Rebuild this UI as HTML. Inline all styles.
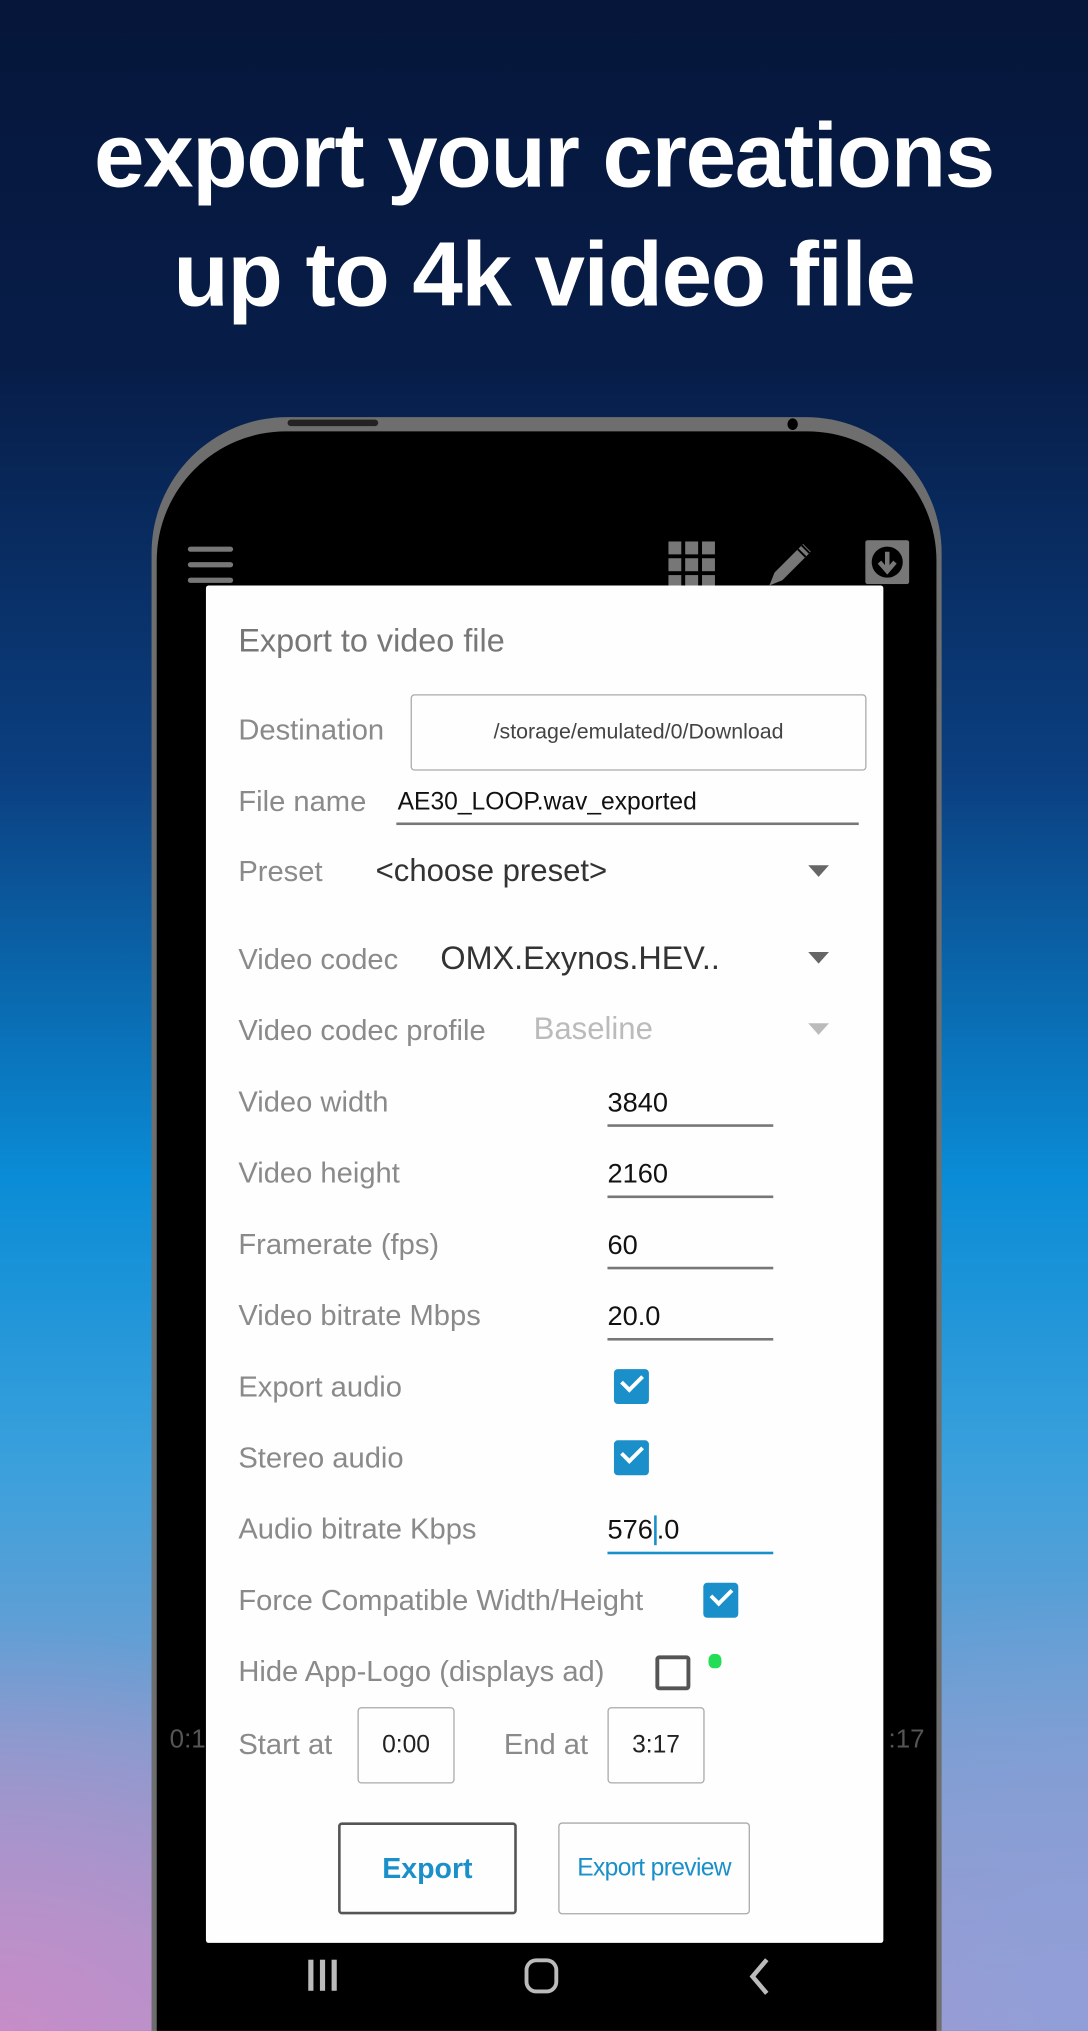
<!DOCTYPE html>
<html><head><meta charset="utf-8"><style>
*{margin:0;padding:0;box-sizing:border-box}
html,body{width:1088px;height:2031px;overflow:hidden}
body{background:#061638;position:relative}
#w{position:absolute;left:0;top:0;width:840px;height:1568px;transform:scale(1.295238);transform-origin:0 0;overflow:hidden;
background:
radial-gradient(ellipse 500px 500px at 840px 1568px,rgba(140,160,220,.8),rgba(140,160,220,0) 70%),
radial-gradient(ellipse 520px 420px at 0px 1568px,rgba(200,140,200,.95),rgba(200,140,200,0) 75%),
linear-gradient(180deg,#06163a 0%,#071d48 18%,#0b3f80 38%,#0a8cd6 58%,#3aa0dc 72%,#7a9ed0 86%,#a698cc 100%);
font-family:"Liberation Sans",sans-serif}
.h{position:absolute;left:0;width:840px;text-align:center;color:#fff;font-weight:bold;font-size:70px;letter-spacing:-1px;line-height:80px}
.bez{position:absolute;left:117px;top:322px;width:610px;height:1300px;background:#6e6e6e;border-radius:105px 105px 0 0}
.scr{position:absolute;left:121px;top:333px;width:602px;height:1300px;background:#000;border-radius:100px 100px 0 0}
.dlg{position:absolute;left:159px;top:452px;width:523px;height:1048px;background:#fefefe;border-radius:2px}
.l{position:absolute;left:184px;font-size:22.5px;color:#8a8a8a;line-height:30px;white-space:nowrap}
.v{position:absolute;font-size:21px;color:#111;line-height:30px;white-space:nowrap}
.u{position:absolute;height:2px;background:#777}
.cb{position:absolute;width:27px;height:27px;background:#1a8fc9;border-radius:3px}
.cb:after{content:"";position:absolute;left:6px;top:4px;width:13px;height:7px;border-left:3px solid #fff;border-bottom:3px solid #fff;transform:rotate(-45deg)}
.tri{position:absolute;width:0;height:0;border-left:8px solid transparent;border-right:8px solid transparent;border-top:9px solid #666}
.box{position:absolute;border:1.5px solid #aaa;border-radius:3px;text-align:center;color:#222}
</style></head><body><div id="w">
<div class="h" style="top:80px">export your creations</div>
<div class="h" style="top:172px">up to 4k video file</div>

<div class="bez"></div>
<div style="position:absolute;left:222px;top:324px;width:70px;height:5px;background:#222;border-radius:3px"></div>
<div style="position:absolute;left:608px;top:323px;width:8px;height:9px;background:#000;border-radius:50%"></div>
<div class="scr"></div>

<div style="position:absolute;left:145px;top:422px;width:35px;height:4px;background:#777;border-radius:2px;box-shadow:0 12px 0 #777,0 24px 0 #777"></div>
<svg style="position:absolute;left:516px;top:418px" width="36" height="36"><g fill="#777"><rect x="0" y="0" width="10" height="10"/><rect x="13" y="0" width="10" height="10"/><rect x="26" y="0" width="10" height="10"/><rect x="0" y="13" width="10" height="10"/><rect x="13" y="13" width="10" height="10"/><rect x="26" y="13" width="10" height="10"/><rect x="0" y="26" width="10" height="10"/><rect x="13" y="26" width="10" height="10"/><rect x="26" y="26" width="10" height="10"/></g></svg>
<svg style="position:absolute;left:590px;top:416px" width="40" height="38"><path d="M4 36 L8 26 L30 4 L36 10 L14 32 Z" fill="#777"/><path d="M26 8 L32 14 M29 5 L35 11" stroke="#000" stroke-width="1.5"/></svg>
<svg style="position:absolute;left:668px;top:417px" width="34" height="34"><rect width="34" height="34" rx="2" fill="#777"/><circle cx="17" cy="17" r="12" fill="#000"/><path d="M17 9 V23 M11 17 L17 24 L23 17" stroke="#777" stroke-width="3.5" fill="none"/></svg>

<div style="position:absolute;left:131px;top:1332px;font-size:20px;color:#555">0:1</div>
<div style="position:absolute;left:686px;top:1332px;font-size:20px;color:#555">:17</div>

<div class="dlg"></div>
<div class="l" style="top:480px;font-size:25px;color:#777">Export to video file</div>

<div class="l" style="top:549px">Destination</div>
<div class="box" style="left:317px;top:536px;width:352px;height:59px;line-height:56px;font-size:16.5px;color:#444">/storage/emulated/0/Download</div>

<div class="l" style="top:604px">File name</div>
<div class="v" style="left:307px;top:605px;font-size:19px">AE30_LOOP.wav_exported</div>
<div class="u" style="left:306px;top:635px;width:357px"></div>

<div class="l" style="top:658px">Preset</div>
<div class="v" style="left:290px;top:658px;font-size:24px;color:#333">&lt;choose preset&gt;</div>
<div class="tri" style="left:624px;top:668px"></div>

<div class="l" style="top:726px">Video codec</div>
<div class="v" style="left:340px;top:725px;font-size:25px;color:#333">OMX.Exynos.HEV..</div>
<div class="tri" style="left:624px;top:735px"></div>

<div class="l" style="top:781px">Video codec profile</div>
<div class="v" style="left:412px;top:780px;font-size:24px;color:#bbb">Baseline</div>
<div class="tri" style="left:624px;top:790px;border-top-color:#bbb"></div>

<div class="l" style="top:836px">Video width</div>
<div class="v" style="left:469px;top:837px">3840</div><div class="u" style="left:469px;top:868px;width:128px"></div>
<div class="l" style="top:891px">Video height</div>
<div class="v" style="left:469px;top:892px">2160</div><div class="u" style="left:469px;top:923px;width:128px"></div>
<div class="l" style="top:946px">Framerate (fps)</div>
<div class="v" style="left:469px;top:947px">60</div><div class="u" style="left:469px;top:978px;width:128px"></div>
<div class="l" style="top:1001px">Video bitrate Mbps</div>
<div class="v" style="left:469px;top:1002px">20.0</div><div class="u" style="left:469px;top:1033px;width:128px"></div>

<div class="l" style="top:1056px">Export audio</div><div class="cb" style="left:474px;top:1057px"></div>
<div class="l" style="top:1111px">Stereo audio</div><div class="cb" style="left:474px;top:1112px"></div>
<div class="l" style="top:1166px">Audio bitrate Kbps</div>
<div class="v" style="left:469px;top:1167px">576<span style="border-left:2px solid #1a8fc9;margin-left:1px"></span>.0</div>
<div class="u" style="left:469px;top:1198px;width:128px;background:#1a8fc9"></div>

<div class="l" style="top:1221px">Force Compatible Width/Height</div><div class="cb" style="left:543px;top:1222px"></div>
<div class="l" style="top:1276px">Hide App-Logo (displays ad)</div>
<div style="position:absolute;left:506px;top:1278px;width:27px;height:27px;border:3px solid #555;border-radius:3px"></div>
<div style="position:absolute;left:547px;top:1277px;width:10px;height:11px;background:#22dd55;border-radius:40%"></div>

<div class="l" style="top:1332px">Start at</div>
<div class="box" style="left:276px;top:1318px;width:75px;height:59px;line-height:57px;font-size:19px">0:00</div>
<div class="l" style="left:389px;top:1332px">End at</div>
<div class="box" style="left:469px;top:1318px;width:75px;height:59px;line-height:57px;font-size:19px">3:17</div>

<div class="box" style="left:261px;top:1407px;width:138px;height:71px;line-height:68px;border:2px solid #555;color:#1a8fc9;font-weight:bold;font-size:22px">Export</div>
<div class="box" style="left:431px;top:1407px;width:148px;height:71px;line-height:69px;color:#1a8fc9;font-size:19px;letter-spacing:-0.5px">Export preview</div>

<div style="position:absolute;left:238px;top:1513px;width:4px;height:24px;background:#bbb;box-shadow:9px 0 0 #bbb,18px 0 0 #bbb"></div>
<div style="position:absolute;left:405px;top:1512px;width:26px;height:27px;border:3px solid #bbb;border-radius:9px"></div>
<svg style="position:absolute;left:576px;top:1511px" width="20" height="30"><path d="M16 2 L5 15 L16 28" stroke="#bbb" stroke-width="3.5" fill="none"/></svg>
</div></body></html>
